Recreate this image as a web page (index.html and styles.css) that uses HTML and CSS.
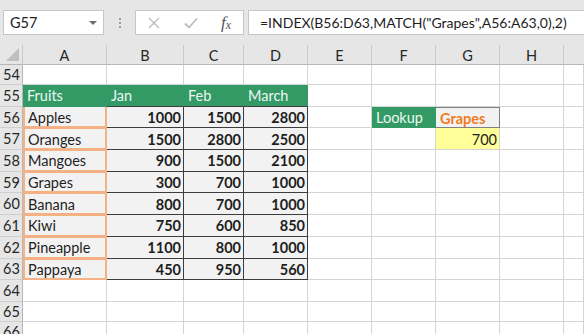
FILE: index.html
```html
<!DOCTYPE html>
<html>
<head>
<meta charset="utf-8">
<link rel="stylesheet" href="styles.css">
</head>
<body>
<div class="app">
  <div class="fbar">
    <div class="namebox"><span class="nb-text">G57</span><span class="nb-arrow"></span></div>
    <div class="dots"><i></i><i></i><i></i></div>
    <div class="btns">
      <svg class="ic" width="12" height="12" viewBox="0 0 12 12"><path d="M1 1L11 11M11 1L1 11" stroke="#bdbdbd" stroke-width="1.4" fill="none"/></svg>
      <svg class="ic" width="14" height="12" viewBox="0 0 14 12"><path d="M1 6.5L5 10.5L13 1.5" stroke="#bdbdbd" stroke-width="1.8" fill="none"/></svg>
      <span class="fx">f<sub>x</sub></span>
    </div>
    <div class="formula">=INDEX(B56:D63,MATCH("Grapes",A56:A63,0),2)</div>
  </div>
  <div class="sheet">
    <div class="hd corner"><span class="tri"></span></div>
    <div class="hd col">A</div><div class="hd col">B</div><div class="hd col">C</div><div class="hd col">D</div><div class="hd col">E</div><div class="hd col">F</div><div class="hd col">G</div><div class="hd col">H</div><div class="hd col last"></div>

    <div class="hd row r20">54</div>
    <div class="c"></div><div class="c"></div><div class="c"></div><div class="c"></div><div class="c"></div><div class="c"></div><div class="c"></div><div class="c"></div><div class="c"></div>

    <div class="hd row">55</div>
    <div class="c green">Fruits</div><div class="c green gd">Jan</div><div class="c green gd">Feb</div><div class="c green gd">March</div><div class="c"></div><div class="c"></div><div class="c"></div><div class="c"></div><div class="c"></div>

    <div class="hd row">56</div>
    <div class="c fruit first">Apples</div><div class="c num">1000</div><div class="c num">1500</div><div class="c num">2800</div><div class="c"></div><div class="c green">Lookup</div><div class="c key">Grapes</div><div class="c"></div><div class="c"></div>

    <div class="hd row">57</div>
    <div class="c fruit">Oranges</div><div class="c num">1500</div><div class="c num">2800</div><div class="c num">2500</div><div class="c"></div><div class="c"></div><div class="c result">700</div><div class="c"></div><div class="c"></div>

    <div class="hd row">58</div>
    <div class="c fruit">Mangoes</div><div class="c num">900</div><div class="c num">1500</div><div class="c num">2100</div><div class="c"></div><div class="c"></div><div class="c"></div><div class="c"></div><div class="c"></div>

    <div class="hd row">59</div>
    <div class="c fruit">Grapes</div><div class="c num">300</div><div class="c num">700</div><div class="c num">1000</div><div class="c"></div><div class="c"></div><div class="c"></div><div class="c"></div><div class="c"></div>

    <div class="hd row">60</div>
    <div class="c fruit">Banana</div><div class="c num">800</div><div class="c num">700</div><div class="c num">1000</div><div class="c"></div><div class="c"></div><div class="c"></div><div class="c"></div><div class="c"></div>

    <div class="hd row">61</div>
    <div class="c fruit">Kiwi</div><div class="c num">750</div><div class="c num">600</div><div class="c num">850</div><div class="c"></div><div class="c"></div><div class="c"></div><div class="c"></div><div class="c"></div>

    <div class="hd row">62</div>
    <div class="c fruit">Pineapple</div><div class="c num">1100</div><div class="c num">800</div><div class="c num">1000</div><div class="c"></div><div class="c"></div><div class="c"></div><div class="c"></div><div class="c"></div>

    <div class="hd row">63</div>
    <div class="c fruit">Pappaya</div><div class="c num">450</div><div class="c num">950</div><div class="c num">560</div><div class="c"></div><div class="c"></div><div class="c"></div><div class="c"></div><div class="c"></div>

    <div class="hd row">64</div>
    <div class="c"></div><div class="c"></div><div class="c"></div><div class="c"></div><div class="c"></div><div class="c"></div><div class="c"></div><div class="c"></div><div class="c"></div>

    <div class="hd row r20">65</div>
    <div class="c"></div><div class="c"></div><div class="c"></div><div class="c"></div><div class="c"></div><div class="c"></div><div class="c"></div><div class="c"></div><div class="c"></div>

    <div class="hd row r20">66</div>
    <div class="c"></div><div class="c"></div><div class="c"></div><div class="c"></div><div class="c"></div><div class="c"></div><div class="c"></div><div class="c"></div><div class="c"></div>
  </div>
</div>
</body>
</html>
```
FILE: styles.css
```css
* { box-sizing: border-box; }
html, body { margin: 0; padding: 0; background: #fff; }
body { width: 584px; height: 334px; overflow: hidden; font-family: Lato, "Open Sans", sans-serif; font-size: 14px; color: #1e1e1e; }

.fbar { height: 45px; background: #e6e6e6; display: flex; align-items: flex-start; padding-top: 10px; }
.namebox { margin-left: 3px; width: 101px; height: 25px; background: #fff; border: 1px solid #c6c6c6; display: flex; align-items: center; justify-content: space-between; padding: 0 6px 0 6px; }
.nb-text { font-size: 14.5px; color: #222; }
.nb-arrow { width: 0; height: 0; border-left: 4px solid transparent; border-right: 4px solid transparent; border-top: 4px solid #6d6d6d; }
.dots { width: 31px; height: 25px; display: flex; flex-direction: column; align-items: center; justify-content: center; gap: 2px; }
.dots i { display: block; width: 2px; height: 2px; background: #9d9d9d; }
.btns { width: 109px; height: 25px; background: #fff; border: 1px solid #c6c6c6; display: flex; align-items: center; padding-left: 12px; gap: 24px; }
.fx { font-family: "Liberation Serif", serif; font-style: italic; font-size: 17px; color: #555; margin-left: -1px; }
.fx sub { font-size: 12px; vertical-align: -1px; }
.formula { flex: 1; margin-left: 4px; height: 25px; background: #fff; border: 1px solid #c6c6c6; border-right: 0; padding-left: 11px; display: flex; align-items: center; font-size: 14px; color: #1e1e1e; white-space: nowrap; }

.sheet { display: grid; grid-template-columns: 23px 84px 77px 60px 64px 64px 64px 64px 64px 1fr; grid-template-rows: 20px 20px repeat(10, 21.7px) 20px 20px; }
.hd { background: #e6e6e6; color: #262626; display: flex; align-items: center; }
.col { justify-content: center; border-right: 1px solid #c9c9c9; border-bottom: 1px solid #b7b7b7; padding-top: 1px; font-size: 14.5px; }
.col.last { border-right: 0; }
.corner { border-right: 1px solid #c9c9c9; border-bottom: 1px solid #b7b7b7; justify-content: flex-end; align-items: flex-end; padding: 0 3px 3px 0; }
.tri { width: 13px; height: 13px; background: #bfbfbf; clip-path: polygon(100% 0, 100% 100%, 0 100%); }
.row { justify-content: center; border-right: 1px solid #b7b7b7; border-bottom: 1px solid #cfcfcf; padding-left: 1px; font-size: 14.5px; }

.c { border-right: 1px solid #d4d4d4; border-bottom: 1px solid #d4d4d4; display: flex; align-items: center; padding: 1px 3px 0 4px; white-space: nowrap; overflow: hidden; font-size: 14.5px; }
.green { background: #339a66; color: #eef8f2; border-color: #339a66; }
.green.gd { border-bottom-color: #3c3c3c; }
.fruit { background: #f2f2f2; border: 2px solid #f4b183; border-top-width: 1px; padding-left: 3px; }
.fruit.first { border-top-width: 0; }
.num { background: #f2f2f2; justify-content: flex-end; font-weight: 700; border-right-color: #3c3c3c; border-bottom-color: #3c3c3c; padding-right: 2px; }
.key { background: #f2f2f2; color: #f07c22; font-weight: 700; border: 1px solid #808080; border-left: 0; }
.result { background: #ffff99; justify-content: flex-end; padding-right: 2px; }
```
